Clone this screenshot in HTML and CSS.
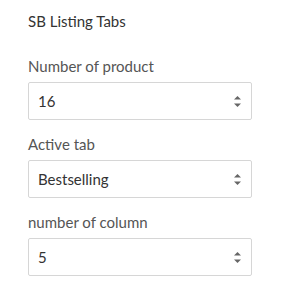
FILE: index.html
```html
<!DOCTYPE html>
<html lang="en">
<head>
<meta charset="UTF-8">
<meta name="viewport" content="width=device-width, initial-scale=1.0">
<title>SB Listing Tabs</title>
<link rel="stylesheet" href="styles.css">
</head>
<body>

<div class="panel">
    <h2 class="panel-title">SB Listing Tabs</h2>

    <div class="field">
        <label class="field-label">Number of product</label>
        <div class="select-box">
            <span class="select-value">16</span>
            <svg class="select-arrows" width="7" height="11" viewBox="0 0 7 11"><polygon points="0,3.5 3.5,0 7,3.5"/><polygon points="0,7.5 3.5,11 7,7.5"/></svg>
        </div>
    </div>

    <div class="field">
        <label class="field-label">Active tab</label>
        <div class="select-box">
            <span class="select-value">Bestselling</span>
            <svg class="select-arrows" width="7" height="11" viewBox="0 0 7 11"><polygon points="0,3.5 3.5,0 7,3.5"/><polygon points="0,7.5 3.5,11 7,7.5"/></svg>
        </div>
    </div>

    <div class="field">
        <label class="field-label">number of column</label>
        <div class="select-box">
            <span class="select-value">5</span>
            <svg class="select-arrows" width="7" height="11" viewBox="0 0 7 11"><polygon points="0,3.5 3.5,0 7,3.5"/><polygon points="0,7.5 3.5,11 7,7.5"/></svg>
        </div>
    </div>
</div>

</body>
</html>
```

FILE: styles.css
```css
body {
    font-family: Lato, "Open Sans", sans-serif;
    background-color: #fff;
    margin: 0;
    color: #333;
}
.panel {
    width: 224px;
    padding: 11px 28px 0;
}
.panel-title {
    font-size: 15px;
    font-weight: normal;
    line-height: 20px;
    color: #333;
    margin: 0 0 25px;
}
.field {
    margin-bottom: 14px;
}
.field-label {
    display: block;
    font-size: 15px;
    line-height: 20px;
    color: #555;
    margin-bottom: 6px;
}
.select-box {
    display: flex;
    align-items: center;
    justify-content: space-between;
    height: 38px;
    box-sizing: border-box;
    border: 1px solid #d6d6d6;
    border-radius: 2px;
    padding: 0 10px 0 9px;
    font-size: 15px;
    color: #333;
}
.select-arrows {
    fill: #666;
}
```
